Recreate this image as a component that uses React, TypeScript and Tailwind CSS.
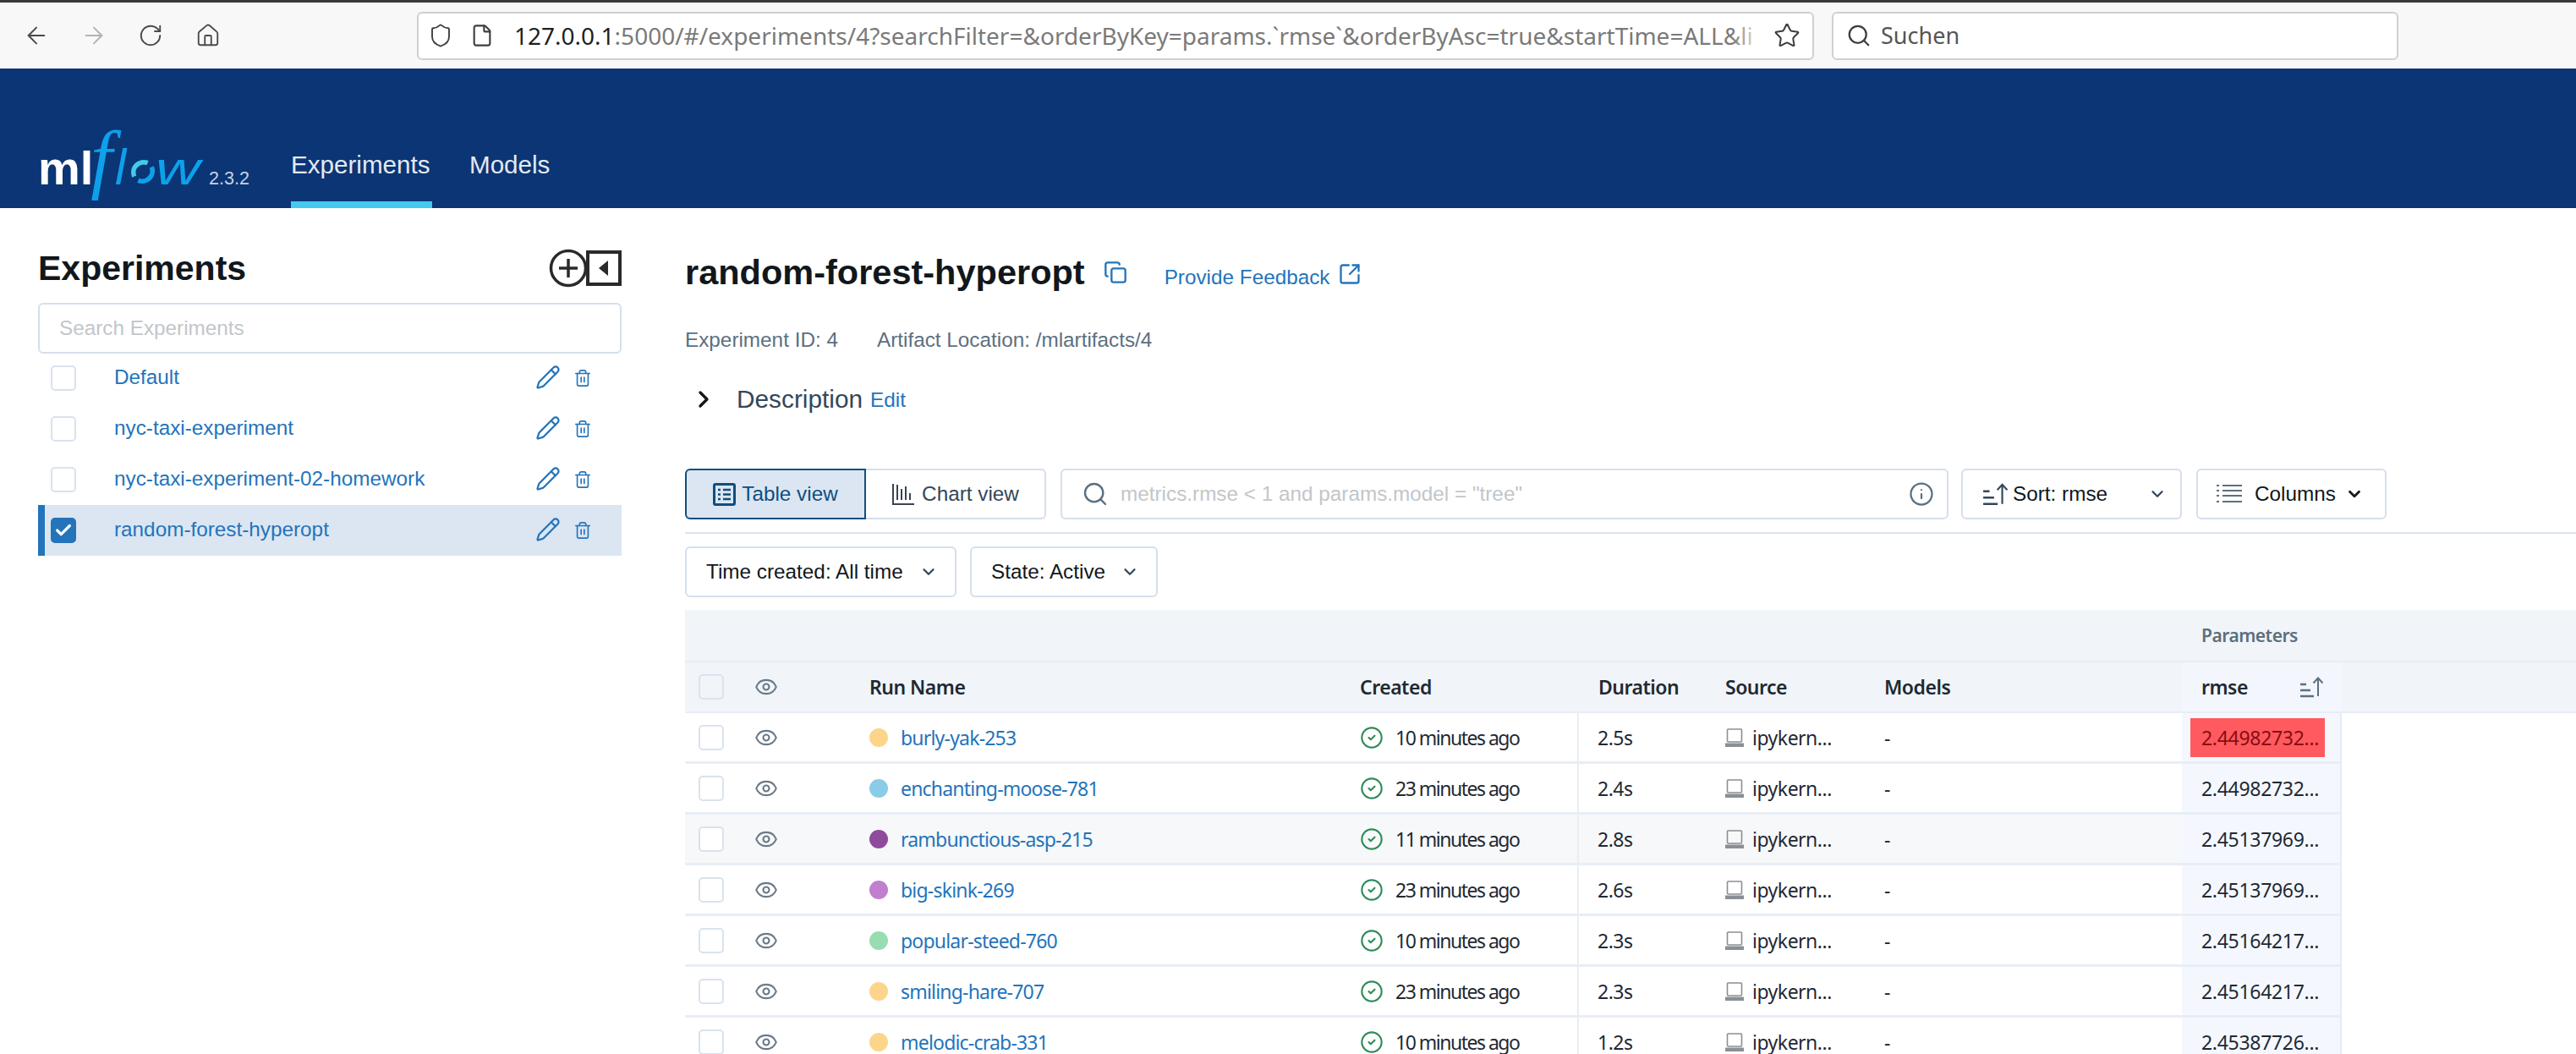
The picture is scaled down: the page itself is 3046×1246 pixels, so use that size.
import {
  ArrowLeft,
  ArrowRight,
  RotateCw,
  Home,
  Shield,
  File,
  Star,
  Search,
  Pencil,
  Trash2,
  Check,
  Copy,
  SquareArrowOutUpRight,
  ChevronRight,
  ChevronDown,
  Info,
  Eye,
  CircleCheck,
} from "lucide-react";

const experiments = [
  { name: "Default" },
  { name: "nyc-taxi-experiment" },
  { name: "nyc-taxi-experiment-02-homework" },
  { name: "random-forest-hyperopt", active: true },
];

const runs = [
  { name: "burly-yak-253", color: "bg-[#fdd58a]", created: "10 minutes ago", duration: "2.5s", rmse: "2.44982732...", best: true },
  { name: "enchanting-moose-781", color: "bg-[#8acbe8]", created: "23 minutes ago", duration: "2.4s", rmse: "2.44982732..." },
  { name: "rambunctious-asp-215", color: "bg-[#8f4a9e]", created: "11 minutes ago", duration: "2.8s", rmse: "2.45137969...", hover: true },
  { name: "big-skink-269", color: "bg-[#c17fcf]", created: "23 minutes ago", duration: "2.6s", rmse: "2.45137969..." },
  { name: "popular-steed-760", color: "bg-[#98dcb2]", created: "10 minutes ago", duration: "2.3s", rmse: "2.45164217..." },
  { name: "smiling-hare-707", color: "bg-[#fdd58a]", created: "23 minutes ago", duration: "2.3s", rmse: "2.45164217..." },
  { name: "melodic-crab-331", color: "bg-[#fdd58a]", created: "10 minutes ago", duration: "1.2s", rmse: "2.45387726..." },
];

function SortIcon({ className }: { className: string }) {
  return (
    <svg viewBox="0 0 28 26" className={className} fill="none" stroke="currentColor" strokeWidth="2.4">
      <path d="M1 10h7M1 17h12M1 24h16" />
      <path d="M22 24V3M16.5 8.5 22 2.5l5.500 6" strokeWidth="2" />
    </svg>
  );
}

function LaptopIcon() {
  return (
    <svg viewBox="0 0 22 22" className="w-[22px] h-[22px] text-[#8a8f94] shrink-0" fill="none">
      <rect x="2.500" y="1" width="17" height="15" rx="1" stroke="currentColor" strokeWidth="1.600" />
      <path d="M0 17.500h22V22H0z" fill="currentColor" />
    </svg>
  );
}

function TableIcon() {
  return (
    <svg viewBox="0 0 27 27" className="w-[27px] h-[27px] text-[#104e7f]" fill="none" stroke="currentColor">
      <rect x="1.500" y="1.500" width="24" height="24" rx="1.500" strokeWidth="3" />
      <path d="M6 8h3M12 8h9M6 13.500h3M12 13.500h9M6 19h3M12 19h9" strokeWidth="2.400" />
    </svg>
  );
}

function ChartIcon() {
  return (
    <svg viewBox="0 0 27 27" className="w-[27px] h-[27px] text-[#3a4550]" fill="none" stroke="currentColor" strokeWidth="2">
      <path d="M2 1v24h25" />
      <path d="M7 20V2M12 20V7M17 20V4M22 20V12" />
    </svg>
  );
}

function ColumnsIcon() {
  return (
    <svg viewBox="0 0 30 26" className="w-[30px] h-[26px] text-[#5c7080]" fill="none" stroke="currentColor" strokeWidth="2">
      <path d="M0 3h3M7 3h23M0 9h3M7 9h23M0 15h3M7 15h23M0 22h3M7 22h23" />
    </svg>
  );
}

function CheckBox({ checked }: { checked?: boolean }) {
  return (
    <span
      className={`flex items-center justify-center w-[30px] h-[30px] rounded-[5px] border-2 ${
        checked ? "bg-[#2374bb] border-[#2374bb]" : "bg-white border-[#d9e3ee]"
      }`}
    >
      {checked && <Check className="w-[22px] h-[22px] text-white" strokeWidth={3.500} />}
    </span>
  );
}

function BrowserBar() {
  return (
    <div className="flex items-center h-[81px] border-t-[3px] border-[#3a3a3a] bg-[#f8f8f8] pl-[27px] font-['Noto_Sans',sans-serif]">
      <ArrowLeft className="w-[32px] h-[32px] text-[#4a4a4f]" strokeWidth={1.500} />
      <ArrowRight className="w-[32px] h-[32px] ml-[36px] text-[#b3b3b5]" strokeWidth={1.500} />
      <RotateCw className="w-[30px] h-[30px] ml-[36px] text-[#4a4a4f]" strokeWidth={1.500} />
      <Home className="w-[30px] h-[30px] ml-[38px] text-[#4a4a4f]" strokeWidth={1.500} />

      <div className="flex items-center w-[1652px] h-[57px] ml-[232px] bg-white border-2 border-[#d0d0d0] rounded-[6px] pl-[11px] pr-[14px]">
        <Shield className="w-[30px] h-[32px] text-[#3d3d40] shrink-0" strokeWidth={1.500} />
        <File className="w-[28px] h-[28px] ml-[20px] text-[#3d3d40] shrink-0" strokeWidth={1.800} />
        <div className="relative flex-1 min-w-0 ml-[24px] whitespace-nowrap text-[28px] text-[#7a7a7a]">
          <span className="text-[#1f1f1f]">127.0.0.1</span>
          :5000/#/experiments/4?searchFilter=&amp;orderByKey=params.`rmse`&amp;orderByAsc=true&amp;startTime=ALL&amp;li
          <span className="absolute right-0 top-0 bottom-0 w-[36px] bg-gradient-to-r from-transparent to-white" />
        </div>
        <Star className="w-[32px] h-[32px] ml-[12px] text-[#3d3d40] shrink-0" strokeWidth={1.500} />
      </div>

      <div className="flex items-center w-[670px] h-[57px] ml-[21px] bg-white border-2 border-[#d0d0d0] rounded-[6px] pl-[15px]">
        <Search className="w-[30px] h-[30px] text-[#3d3d40]" strokeWidth={1.800} />
        <span className="ml-[11px] text-[27px] text-[#555]">Suchen</span>
      </div>
    </div>
  );
}

function Logo() {
  return (
    <div className="flex items-baseline w-[253px] h-[90px] whitespace-nowrap leading-none">
      <span className="text-white text-[56px] font-bold font-['Liberation_Sans',sans-serif]">ml</span>
      <span className="text-[#0ea0ea] text-[92px] italic -ml-[3px] font-['Liberation_Serif',serif]">f</span>
      <span className="text-[#0ea0ea] text-[59px] italic ml-[3px] font-['Liberation_Sans',sans-serif]">l</span>
      <svg viewBox="0 0 32 32" className="w-[30px] h-[30px] ml-[5px]" fill="none" strokeWidth="6">
        <path d="M5 22A13 13 0 0 1 22 5" stroke="#43c9ed" />
        <path d="M27 10A13 13 0 0 1 10 27" stroke="#0ea0ea" />
      </svg>
      <span className="inline-block w-[53px] origin-left scale-x-[1.3] text-[#0ea0ea] text-[56px] italic font-['Liberation_Sans',sans-serif]">
        w
      </span>
      <span className="ml-[10px] text-[21.600px] text-[#c7d2e2] font-['Liberation_Sans',sans-serif]">2.3.2</span>
    </div>
  );
}

function Header() {
  return (
    <div className="flex h-[165px] bg-[#0b3574] pl-[45px]">
      <div className="mt-[60px]">
        <Logo />
      </div>
      <div className="flex ml-[46px] text-[29.600px] text-[#e3e9f3]">
        <div className="flex flex-col w-[167px] border-b-[8px] border-[#43c9ed] pt-[92px]">Experiments</div>
        <div className="pt-[92px] ml-[44px]">Models</div>
      </div>
    </div>
  );
}

function Sidebar() {
  return (
    <div className="w-[810px] shrink-0 pl-[45px] pr-[75px]">
      <div className="flex items-center justify-between h-[112px] pt-[32px]">
        <h1 className="text-[41px] font-bold text-[#11171c]">Experiments</h1>
        <div className="flex items-center -mt-[2px]">
          <svg viewBox="0 0 46 46" className="w-[46px] h-[46px]" fill="none" stroke="#2a2a2a" strokeWidth="3.500">
            <circle cx="23" cy="23" r="20.500" />
            <path d="M23 12v22M12 23h22" />
          </svg>
          <svg viewBox="0 0 42 42" className="w-[42px] h-[42px] -ml-[2px]" fill="none" stroke="#2a2a2a" strokeWidth="4">
            <rect x="2" y="2" width="38" height="38" />
            <path d="M26 12v18L15 21z" fill="#2a2a2a" stroke="none" />
          </svg>
        </div>
      </div>
      <div className="flex items-center h-[60px] border-2 border-[#d4dfec] rounded-[6px] pl-[23px] text-[24.300px] text-[#c2c6ca]">
        Search Experiments
      </div>
      <div className="mt-[-1px]">
        {experiments.map((exp) => (
          <div
            key={exp.name}
            className={`flex items-center h-[60px] text-[24.300px] text-[#2374bb] ${
              exp.active ? "bg-[#dbe6f2] border-l-[8px] border-[#2374bb] pl-[7px]" : "pl-[15px]"
            }`}
          >
            <CheckBox checked={exp.active} />
            <span className="ml-[45px] -mt-[2px] flex-1">{exp.name}</span>
            <Pencil className="w-[30px] h-[30px] -mt-[3px] text-[#2374bb]" strokeWidth={1.800} />
            <Trash2 className="w-[22px] h-[24px] ml-[15px] mr-[35px] text-[#2374bb]" strokeWidth={1.800} />
          </div>
        ))}
      </div>
    </div>
  );
}

function FilterButton({ label, className }: { label: string; className: string }) {
  return (
    <div className={`flex items-center h-[60px] border-2 border-[#d4dfec] rounded-[6px] text-[24.300px] text-[#11171c] ${className}`}>
      {label}
      <ChevronDown className="w-[22px] h-[22px] ml-auto text-[#33475b]" strokeWidth={2.500} />
    </div>
  );
}

function Toolbar() {
  return (
    <div className="flex items-center h-[60px] text-[24.300px] text-[#33475b]">
      <div className="flex items-center justify-center gap-[7px] w-[214px] h-[60px] bg-[#dbe6f2] border-2 border-[#104e7f] rounded-l-[6px] text-[#104e7f]">
        <TableIcon />
        Table view
      </div>
      <div className="flex items-center justify-center gap-[9px] w-[213px] h-[60px] border-2 border-l-0 border-[#d4dfec] rounded-r-[6px]">
        <ChartIcon />
        Chart view
      </div>
      <div className="flex items-center w-[1050px] h-[60px] ml-[17px] border-2 border-[#d4dfec] rounded-[6px] pl-[23px] pr-[15px]">
        <Search className="w-[32px] h-[32px] text-[#5c7080]" strokeWidth={1.800} />
        <span className="ml-[14px] flex-1 text-[#c2c6ca]">metrics.rmse &lt; 1 and params.model = "tree"</span>
        <Info className="w-[30px] h-[30px] text-[#5c7080]" strokeWidth={1.800} />
      </div>
      <div className="flex items-center w-[261px] h-[60px] ml-[15px] border-2 border-[#d4dfec] rounded-[6px] pl-[23px] pr-[16px] text-[#11171c]">
        <SortIcon className="w-[30px] h-[28px] text-[#33475b]" />
        <span className="ml-[6px]">Sort: rmse</span>
        <ChevronDown className="w-[22px] h-[22px] ml-auto text-[#33475b]" strokeWidth={2.500} />
      </div>
      <div className="flex items-center w-[225px] h-[60px] ml-[17px] border-2 border-[#d4dfec] rounded-[6px] pl-[22px] text-[#11171c]">
        <ColumnsIcon />
        <span className="ml-[15px]">Columns</span>
        <ChevronDown className="w-[22px] h-[22px] ml-[11px] text-[#11171c]" strokeWidth={3} />
      </div>
    </div>
  );
}

function RunTable() {
  return (
    <div className="mt-[15px] font-['Noto_Sans',sans-serif] text-[23px] tracking-[-0.5px]">
      <div className="flex items-center justify-start h-[62px] bg-[#f1f5f9] border-b-2 border-[#e8edf3] pl-[1793px] text-[21px] font-semibold text-[#5c7080]">
        Parameters
      </div>
      <div className="flex items-center h-[60px] bg-[#f1f5f9] border-b-2 border-[#e8eef5] font-semibold text-[#1f2933]">
        <div className="w-[65px] pl-[16px] shrink-0">
          <span className="block w-[30px] h-[30px] rounded-[5px] border-2 border-[#d9e3ee]" />
        </div>
        <div className="w-[153px] pl-[17px] shrink-0">
          <Eye className="w-[28px] h-[28px] text-[#6b7a88]" strokeWidth={1.800} />
        </div>
        <div className="w-[580px] shrink-0">Run Name</div>
        <div className="w-[282px] shrink-0">Created</div>
        <div className="w-[150px] shrink-0">Duration</div>
        <div className="w-[188px] shrink-0">Source</div>
        <div className="w-[352px] shrink-0">Models</div>
        <div className="flex items-center w-[189px] h-full pl-[23px] pr-[22px] bg-[#f3f7fd] shrink-0">
          rmse
          <SortIcon className="w-[28px] h-[28px] ml-auto text-[#5c7080]" />
        </div>
      </div>
      {runs.map((run) => (
        <div key={run.name} className="flex items-center w-[1959px] h-[60px] border-b-[3px] border-[#e8eef5] text-[#1f2933]">
          <div className={`flex items-center w-[1770px] h-full ${run.hover ? "bg-[#f7f8f9]" : "bg-white"}`}>
            <div className="w-[65px] pl-[16px] shrink-0">
              <CheckBox />
            </div>
            <div className="w-[153px] pl-[17px] shrink-0">
              <Eye className="w-[28px] h-[28px] text-[#6b7a88]" strokeWidth={1.800} />
            </div>
            <div className="flex items-center w-[580px] shrink-0 text-[#2374bb]">
              <span className={`w-[22px] h-[22px] rounded-full ${run.color}`} />
              <span className="ml-[15px] tracking-[-0.8px]">{run.name}</span>
            </div>
            <div className="flex items-center w-[259px] h-full border-r-2 border-[#e8eef5] shrink-0">
              <CircleCheck className="w-[28px] h-[28px] text-[#2e8b57]" strokeWidth={1.800} />
              <span className="ml-[14px] tracking-[-1.500px]">{run.created}</span>
            </div>
            <div className="w-[173px] pl-[22px] shrink-0">{run.duration}</div>
            <div className="flex items-center w-[188px] shrink-0">
              <LaptopIcon />
              <span className="ml-[10px]">ipykern...</span>
            </div>
            <div className="w-[352px] shrink-0">-</div>
          </div>
          <div className="flex items-center w-[189px] h-full pl-[10px] bg-[#f4f8fe] border-r-2 border-[#e3ebf4] shrink-0">
            <span
              className={`flex items-center w-[159px] h-[46px] pl-[13px] whitespace-nowrap tracking-[-0.3px] ${
                run.best ? "bg-[#fe5a5f] text-[#8a0c12]" : ""
              }`}
            >
              {run.rmse}
            </span>
          </div>
        </div>
      ))}
    </div>
  );
}

export default function App() {
  return (
    <div className="w-[3046px] h-[1246px] overflow-hidden bg-white font-['Liberation_Sans',sans-serif]">
      <BrowserBar />
      <Header />
      <div className="flex">
        <Sidebar />
        <div className="flex-1 min-w-0">
          <div className="flex items-center h-[80px] mt-[36px]">
            <h2 className="text-[41.500px] font-bold text-[#11171c]">random-forest-hyperopt</h2>
            <Copy className="w-[28px] h-[28px] ml-[22px] text-[#2374bb]" strokeWidth={2} />
            <span className="ml-[44px] mt-[12px] text-[24.300px] text-[#2374bb]">Provide Feedback</span>
            <SquareArrowOutUpRight className="w-[28px] h-[28px] ml-[9px] mt-[4px] text-[#2374bb]" strokeWidth={2} />
          </div>
          <div className="flex mt-[22px] gap-[46px] text-[24.300px] text-[#5c7080]">
            <span>Experiment ID: 4</span>
            <span>Artifact Location: /mlartifacts/4</span>
          </div>
          <div className="flex items-center h-[50px] mt-[27px]">
            <ChevronRight className="w-[32px] h-[32px] ml-[6px] text-[#11171c]" strokeWidth={2.500} />
            <span className="ml-[23px] text-[29.800px] text-[#33475b]">Description</span>
            <span className="ml-[9px] mt-[2px] text-[24.300px] text-[#2374bb]">Edit</span>
          </div>
          <div className="mt-[57px]">
            <Toolbar />
          </div>
          <div className="h-[2px] mt-[15px] bg-[#dbe4ee]" />
          <div className="flex gap-[16px] mt-[15px]">
            <FilterButton label="Time created: All time" className="w-[321px] pl-[23px] pr-[20px]" />
            <FilterButton label="State: Active" className="w-[222px] pl-[23px] pr-[20px]" />
          </div>
          <RunTable />
        </div>
      </div>
    </div>
  );
}
